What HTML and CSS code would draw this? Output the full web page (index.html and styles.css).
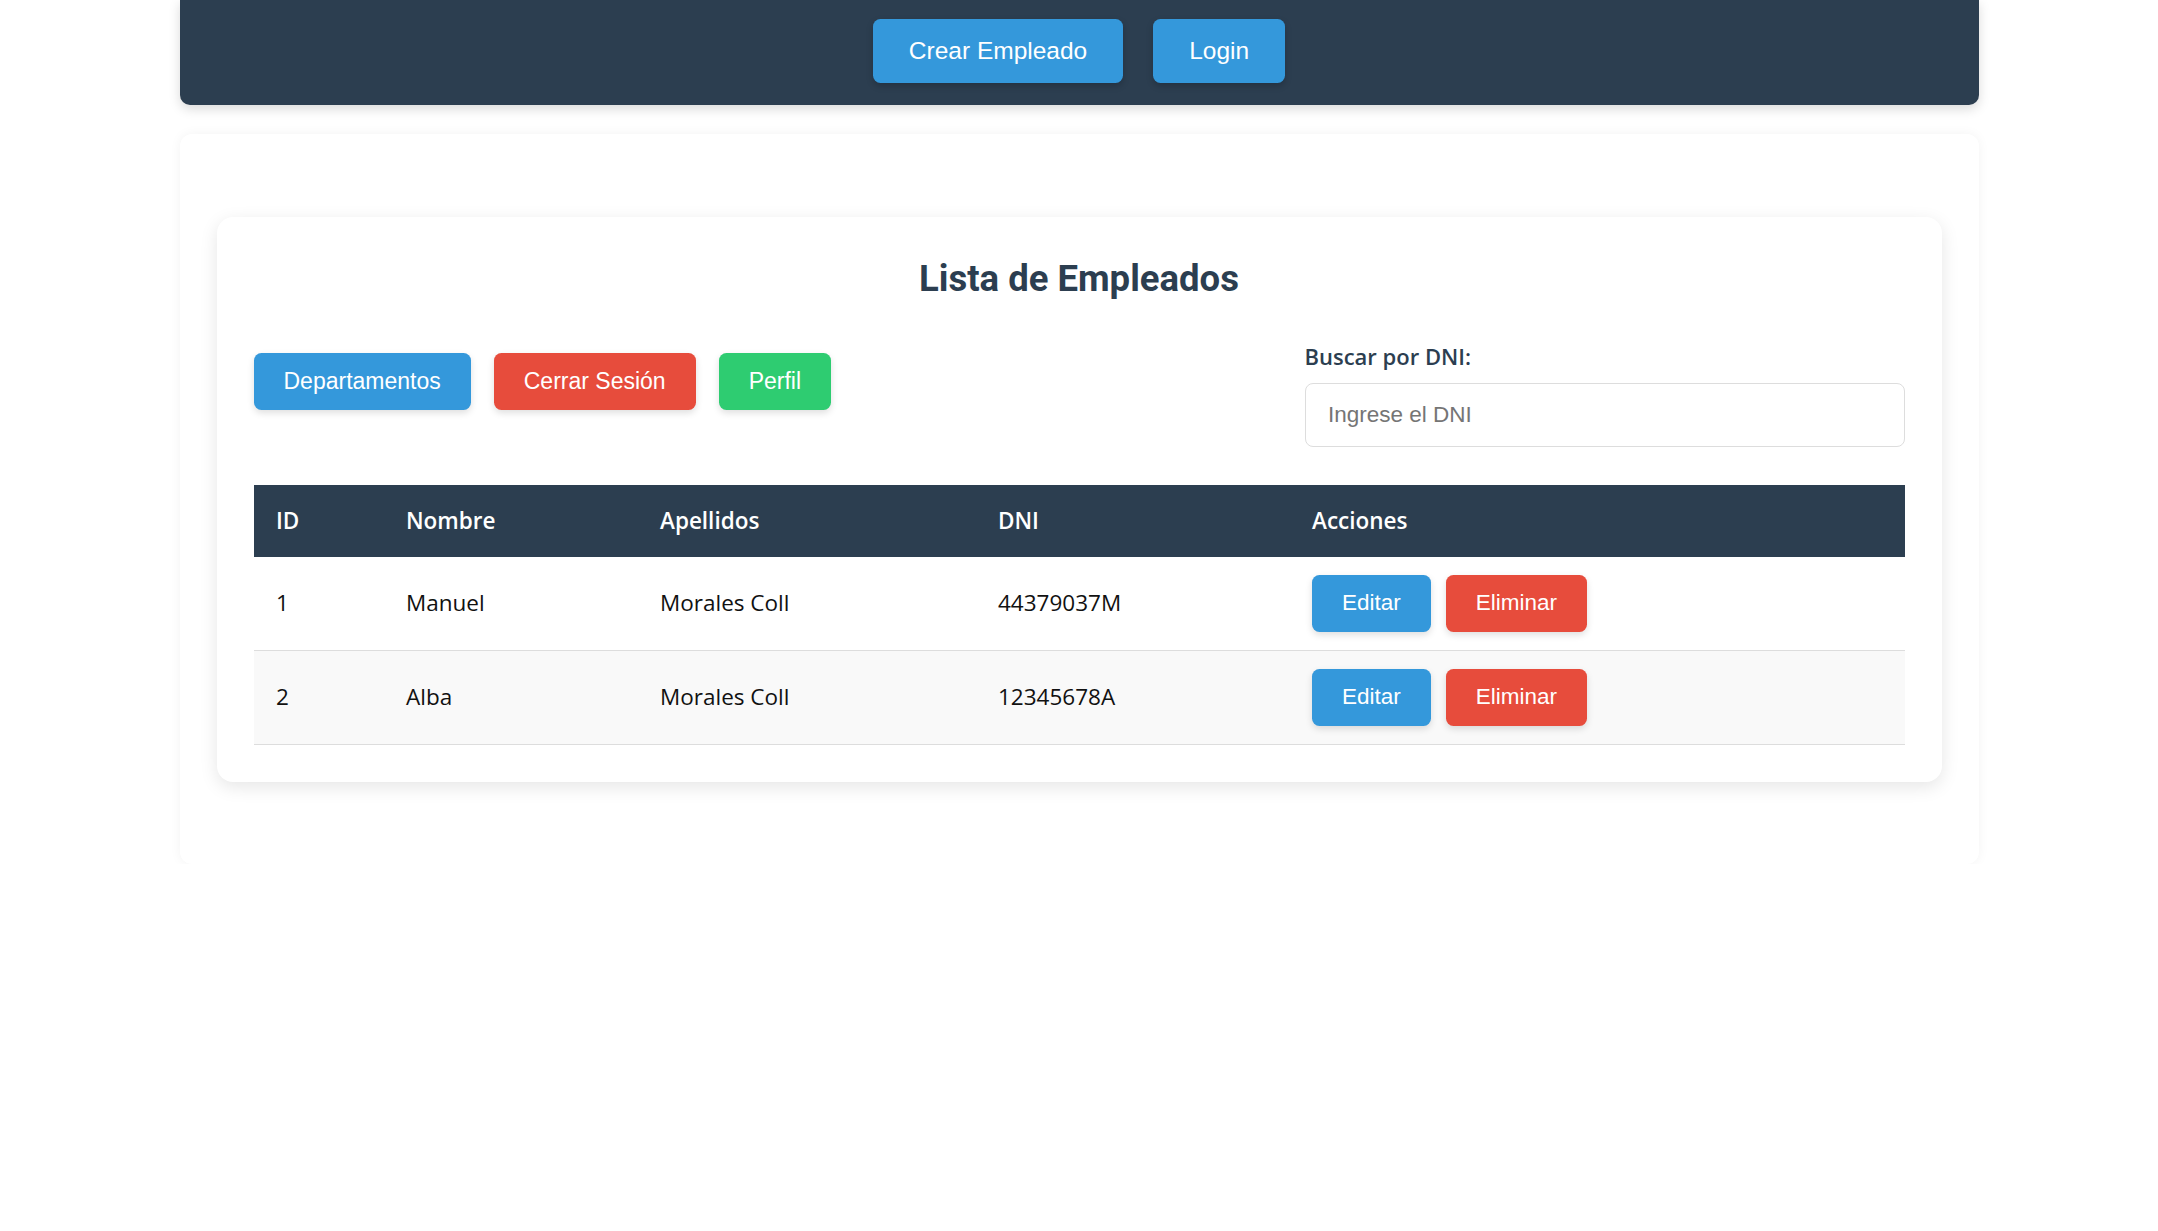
FILE: index.html
```html
<!DOCTYPE html>
<html lang="es">
<head>
<meta charset="utf-8">
<title>Lista de Empleados</title>
<link rel="stylesheet" href="styles.css">
</head>
<body>
<nav class="navbar">
  <a class="btn btn-nav btn-blue" href="#">Crear Empleado</a>
  <a class="btn btn-nav btn-blue" href="#">Login</a>
</nav>
<main class="outer">
  <section class="card">
    <h2 class="title">Lista de Empleados</h2>
    <div class="actions">
      <div class="action-buttons">
        <a class="btn btn-blue" href="#">Departamentos</a>
        <a class="btn btn-red" href="#">Cerrar Sesión</a>
        <a class="btn btn-green" href="#">Perfil</a>
      </div>
      <div class="search">
        <label class="search-label" for="dni">Buscar por DNI:</label>
        <input class="search-input" id="dni" type="text" placeholder="Ingrese el DNI">
      </div>
    </div>
    <table class="table">
      <thead>
        <tr>
          <th class="col-id">ID</th>
          <th class="col-nombre">Nombre</th>
          <th class="col-apellidos">Apellidos</th>
          <th class="col-dni">DNI</th>
          <th class="col-acciones">Acciones</th>
        </tr>
      </thead>
      <tbody>
        <tr>
          <td>1</td>
          <td>Manuel</td>
          <td>Morales Coll</td>
          <td>44379037M</td>
          <td><div class="row-actions"><a class="btn btn-blue" href="#">Editar</a><a class="btn btn-red" href="#">Eliminar</a></div></td>
        </tr>
        <tr class="alt">
          <td>2</td>
          <td>Alba</td>
          <td>Morales Coll</td>
          <td>12345678A</td>
          <td><div class="row-actions"><a class="btn btn-blue" href="#">Editar</a><a class="btn btn-red" href="#">Eliminar</a></div></td>
        </tr>
      </tbody>
    </table>
  </section>
</main>
</body>
</html>
```

FILE: styles.css
```css
* { box-sizing: border-box; }

body {
  margin: 0;
  background: #ffffff;
  font-family: "Liberation Sans", Arial, sans-serif;
  color: #222;
}

.navbar {
  width: 1799px;
  margin: 0 auto;
  background: #2c3e50;
  border-radius: 0 0 10px 10px;
  padding: 19px 0 22px;
  display: flex;
  justify-content: center;
  gap: 30px;
  box-shadow: 0 4px 12px rgba(0, 0, 0, 0.15);
}

.btn {
  display: inline-block;
  font-family: "Liberation Sans", Arial, sans-serif;
  font-size: 23px;
  line-height: 26px;
  padding: 15.5px 30px;
  color: #ffffff;
  text-decoration: none;
  border-radius: 7.5px;
  box-shadow: 0 3px 7px rgba(0, 0, 0, 0.13);
  white-space: nowrap;
}

.btn-nav {
  font-size: 24.5px;
  line-height: 27.6px;
  padding: 18px 36px;
  box-shadow: 0 3px 7px rgba(0, 0, 0, 0.2);
}

.btn-blue { background: #3498db; }
.btn-red { background: #e74c3c; }
.btn-green { background: #2ecc71; }

.outer {
  width: 1799px;
  margin: 29px auto 0;
  padding: 83px 37px 82px;
  background: #ffffff;
  border-radius: 12px;
  box-shadow: 0 0 12px rgba(0, 0, 0, 0.05);
}

.card {
  background: #ffffff;
  border-radius: 16px;
  padding: 41px 37px 37px;
  box-shadow: 0 5px 18px rgba(0, 0, 0, 0.1);
}

.title {
  margin: 0 0 41px;
  text-align: center;
  font-family: Roboto, "Liberation Sans", sans-serif;
  font-weight: 700;
  font-size: 36.5px;
  line-height: 42px;
  color: #2c3e50;
}

.actions {
  display: flex;
  justify-content: space-between;
  align-items: flex-start;
  margin-bottom: 38px;
}

.action-buttons {
  display: flex;
  gap: 23px;
  margin-top: 12px;
}

.search {
  width: 600px;
  display: flex;
  flex-direction: column;
}

.search-label {
  font-family: "Open Sans", sans-serif;
  font-weight: 600;
  font-size: 22px;
  line-height: 30px;
  color: #2c3e50;
  margin-bottom: 12px;
}

.search-input {
  width: 100%;
  height: 64px;
  padding: 0 22.5px;
  border: 1.5px solid #dddddd;
  border-radius: 8px;
  font-family: "Liberation Sans", Arial, sans-serif;
  font-size: 22.5px;
  color: #333;
  outline: none;
}

.search-input::placeholder { color: #757575; }

.table {
  width: 100%;
  border-collapse: collapse;
  font-family: "Open Sans", sans-serif;
  font-size: 22.5px;
}

.table th {
  background: #2c3e50;
  color: #ffffff;
  font-weight: 600;
  text-align: left;
  padding: 18px 22.5px;
  line-height: 36px;
}

.col-id { width: 130px; }
.col-nombre { width: 254px; }
.col-apellidos { width: 338px; }
.col-dni { width: 314px; }

.table td {
  padding: 18px 22.5px;
  border-bottom: 1px solid #dddddd;
  color: #111;
  vertical-align: middle;
  line-height: 30px;
}

.table tr.alt td { background: #f9f9f9; }

.row-actions {
  display: flex;
  gap: 15px;
}

.row-actions .btn {
  font-size: 22.5px;
}
```
